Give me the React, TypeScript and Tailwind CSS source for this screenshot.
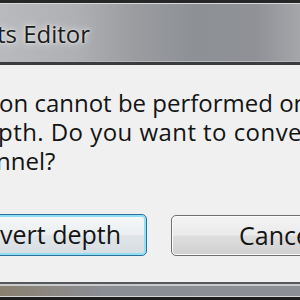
export default function App() {
  const font = { fontFamily: '"Open Sans", "Noto Sans", sans-serif' };
  return (
    <div className="w-[300px] h-[300px] overflow-hidden bg-[#f0f0f0] flex flex-col" style={font}>
      <div className="h-[3px] bg-[#262626]" />
      <div className="h-[1px] bg-[#d8d9db]" />
      <div className="h-[57px] flex items-center overflow-hidden bg-[linear-gradient(to_right,#b9babd_0%,#afb0b3_25%,#9a9ca0_45%,#8d9095_65%,#8f9196_85%,#a4a6aa_100%)]">
        <span className="whitespace-nowrap -ml-[3px] text-[24px] leading-none text-[#1c1c1c] [text-shadow:0_0_8px_rgba(255,255,255,0.9),0_0_3px_rgba(255,255,255,0.7)] mt-[2px]">
          ts Editor
        </span>
      </div>
      <div className="h-[1px] bg-[#b4b6b9]" />
      <div className="h-[3px] bg-[#3a3b3d]" />
      <div className="flex-1 flex flex-col pt-[23px] overflow-hidden">
        <div className="text-[24px] leading-[29px] text-[#141414] whitespace-nowrap -ml-[1px]">
          <div>on cannot be performed on</div>
          <div className="-ml-[1px] tracking-[0.45px]">pth. Do you want to convert</div>
          <div className="-ml-[3px]">nnel?</div>
        </div>
        <div className="flex mt-[39px]">
          <div className="w-[200px] -ml-[53px] h-[42px] shrink-0 rounded-[5px] border border-[#2f6f9c] shadow-[inset_0_0_0_2px_#8fdff7] bg-[linear-gradient(to_bottom,#f5f7f8_0%,#eceff1_48%,#e0e5e8_52%,#d6dde2_100%)] flex items-center justify-end pr-[25px] text-[25px] text-[#141414] whitespace-nowrap">
            Convert depth
          </div>
          <div className="w-[200px] ml-[24px] h-[41px] mt-[1px] shrink-0 rounded-[5px] border border-[#707070] shadow-[inset_0_0_0_1px_#fbfbfb] bg-[linear-gradient(to_bottom,#f3f3f3_0%,#ebebeb_48%,#dedede_52%,#d0d0d0_100%)] flex items-center pl-[67px] text-[25px] text-[#141414] whitespace-nowrap">
            Cancel
          </div>
        </div>
      </div>
      <div className="h-[2px] bg-[#55575a]" />
      <div className="h-[2px] bg-[#c9cacc]" />
      <div className="h-[10px] bg-[linear-gradient(to_right,#8a8070_0%,#8b8680_15%,#8c8e95_35%,#8d8f96_100%)]" />
      <div className="h-[1px] bg-[#d4d5d7]" />
      <div className="h-[3px] bg-[#1f1f1f]" />
    </div>
  );
}
